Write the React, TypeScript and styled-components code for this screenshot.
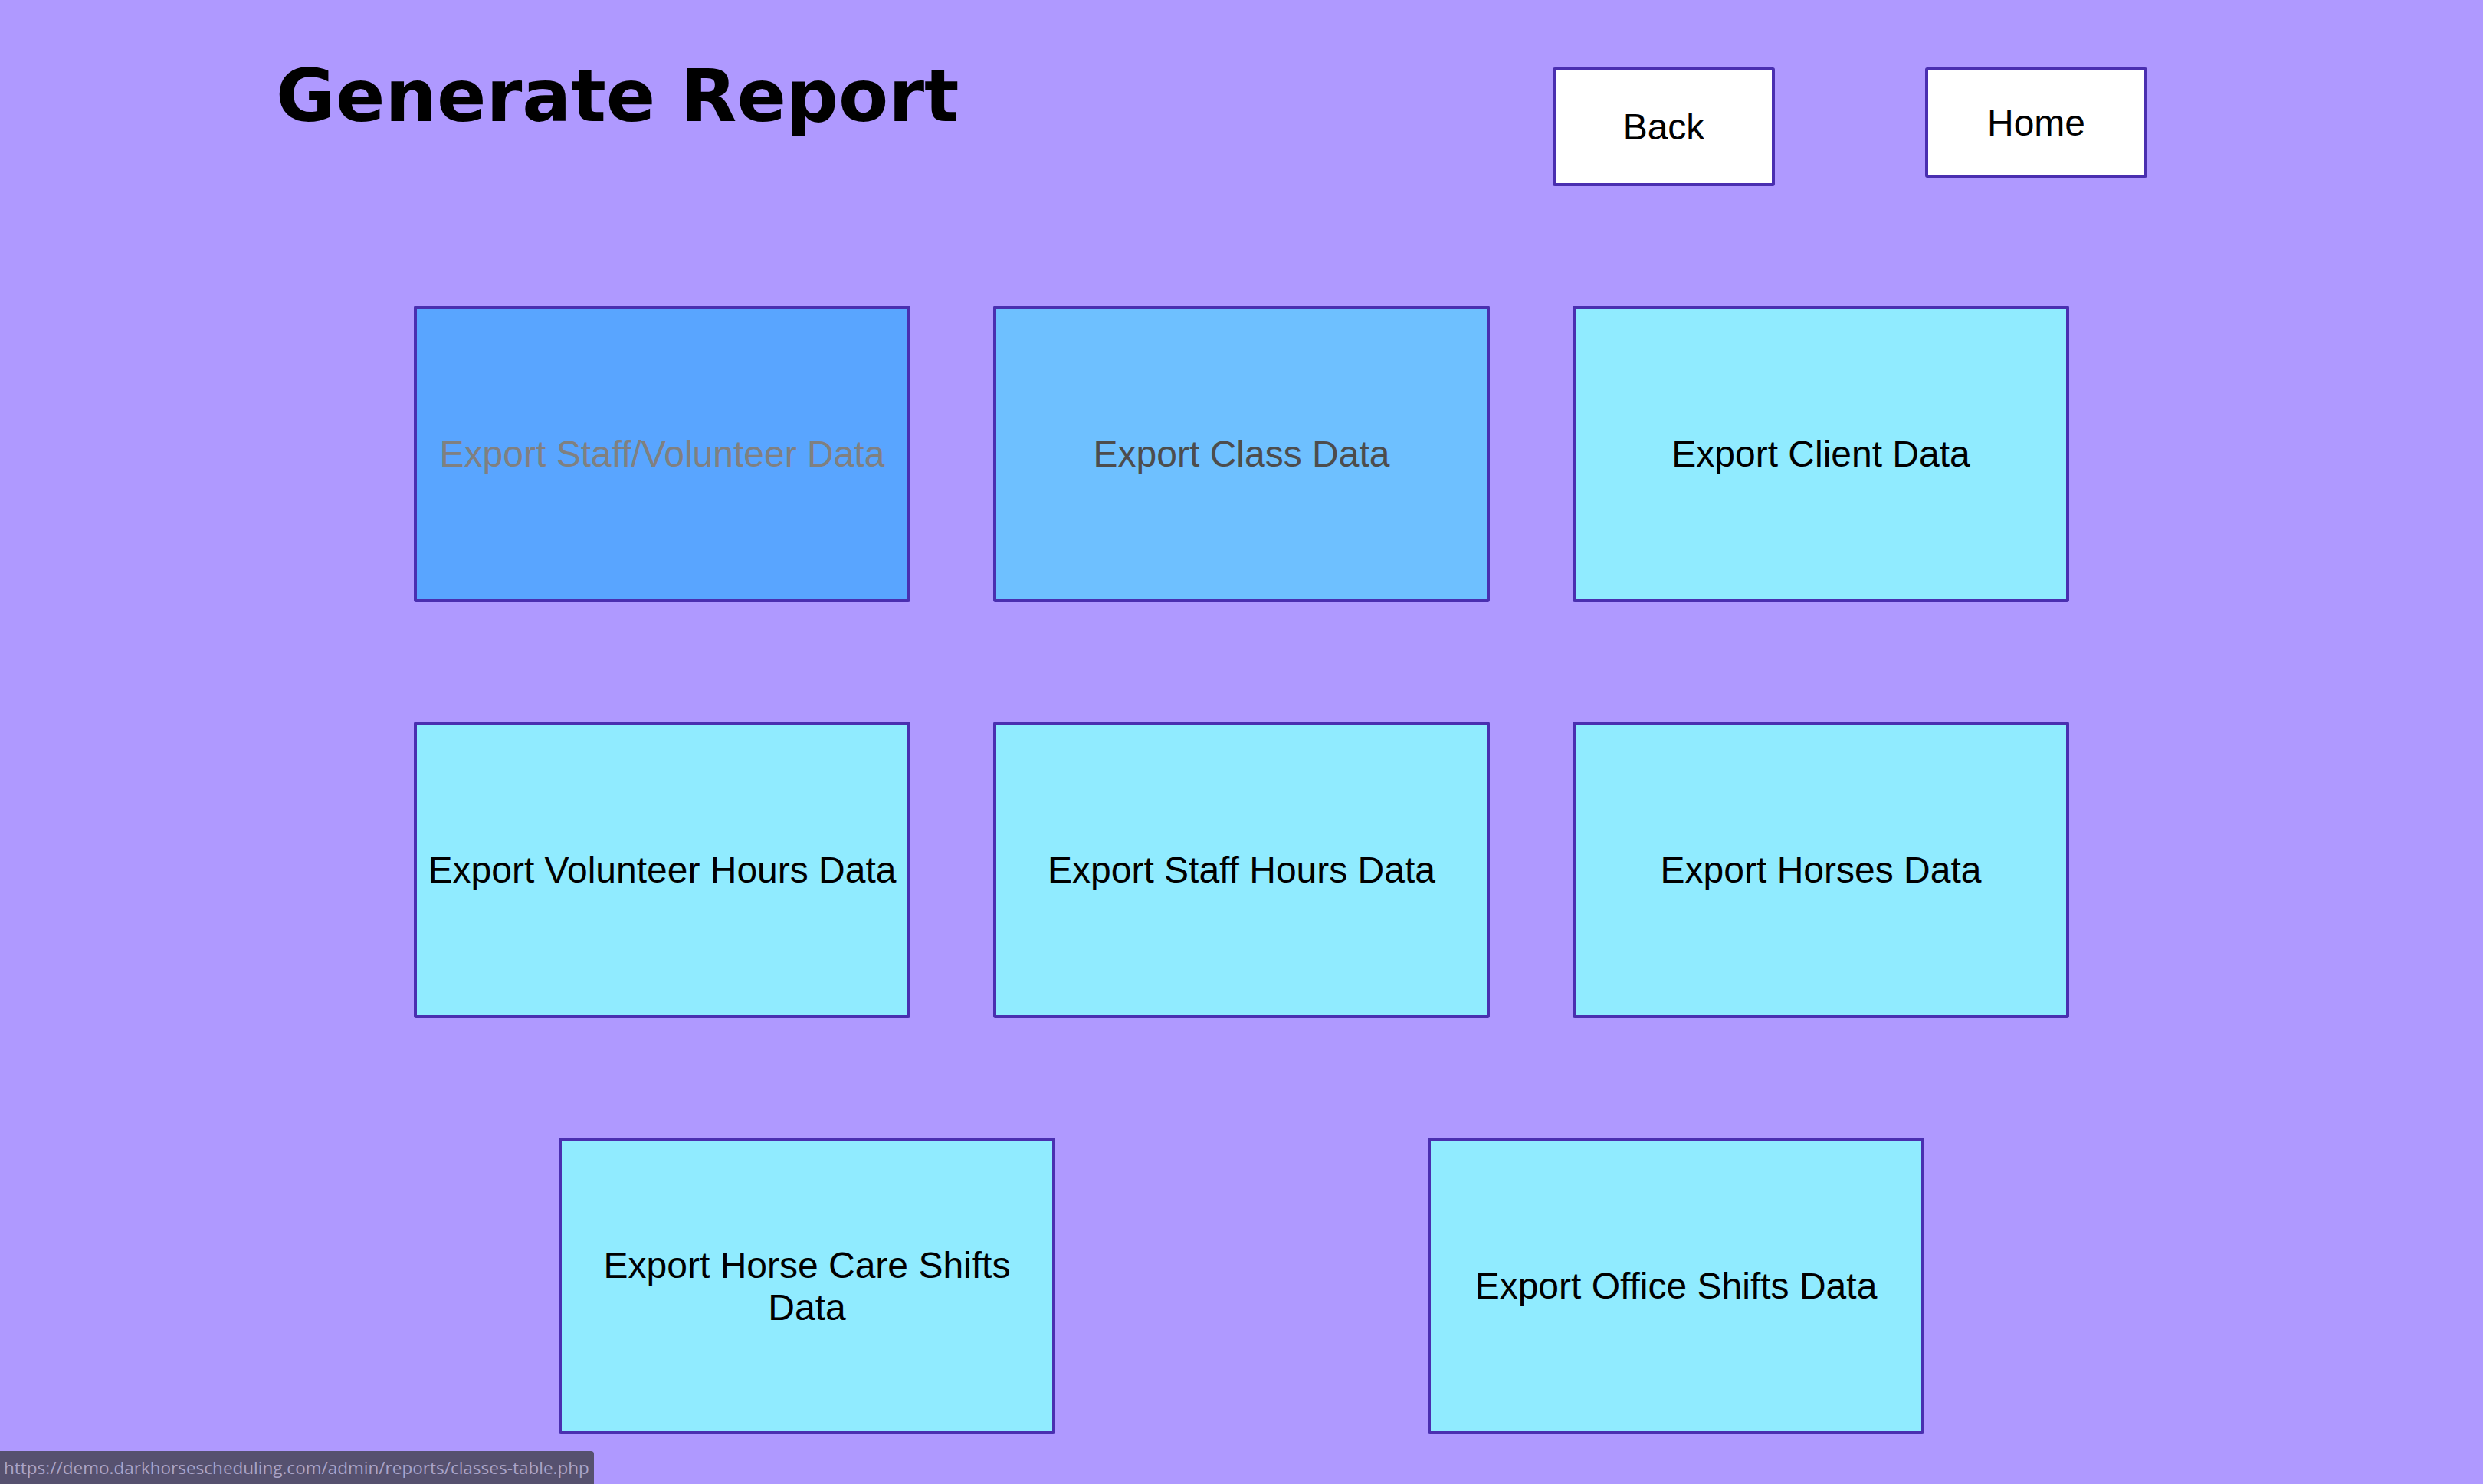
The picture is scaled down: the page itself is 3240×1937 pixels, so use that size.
import styled, { createGlobalStyle } from "styled-components";

const GlobalStyle = createGlobalStyle`
  html, body {
    margin: 0;
    padding: 0;
    background-color: #af99ff;
  }
  body {
    font-family: "Liberation Sans", Arial, sans-serif;
  }
`;

const Page = styled.div`
  min-height: 100vh;
  background-color: #af99ff;
  display: flex;
  flex-direction: column;
  gap: 156px;
`;

const Header = styled.div`
  display: flex;
  justify-content: space-between;
  align-items: flex-start;
  padding: 70px 438px 0 360px;
`;

const Title = styled.h1`
  margin: 0;
  font-family: "DejaVu Sans", Verdana, sans-serif;
  font-weight: bold;
  font-size: 95px;
  line-height: normal;
  color: #000;
`;

const NavButtons = styled.div`
  display: flex;
  align-items: flex-start;
  gap: 196px;
  margin-top: 18px;
`;

const NavButton = styled.button<{ $tall?: boolean }>`
  box-sizing: border-box;
  width: 290px;
  height: ${(p) => (p.$tall ? "155px" : "144px")};
  background-color: #fff;
  border: 4px solid #4a2fb0;
  border-radius: 3px;
  font-family: "Liberation Sans", Arial, sans-serif;
  font-size: 48px;
  color: #000;
  cursor: pointer;
  padding: 0;
`;

const ExportGrid = styled.div`
  width: 70%;
  margin: 0 auto;
  display: flex;
  flex-direction: column;
  gap: 156px;
`;

const ExportRow = styled.div`
  display: flex;
  justify-content: space-around;
`;

const tones: Record<string, { bg: string; fg: string }> = {
  pressed: { bg: "#59a5ff", fg: "#808080" },
  hover: { bg: "#6ec0ff", fg: "#4d4d4d" },
  normal: { bg: "#90ebff", fg: "#000" },
};

const ExportBox = styled.button<{ $tone: string }>`
  box-sizing: border-box;
  width: 648px;
  height: 387px;
  display: flex;
  align-items: center;
  justify-content: center;
  text-align: center;
  padding: 0;
  background-color: ${(p) => tones[p.$tone].bg};
  color: ${(p) => tones[p.$tone].fg};
  border: 4px solid #4a2fb0;
  border-radius: 3px;
  font-family: "Liberation Sans", Arial, sans-serif;
  font-size: 48px;
  line-height: normal;
  cursor: pointer;
`;

const StatusBubble = styled.div`
  position: fixed;
  left: 0;
  bottom: 0;
  height: 43px;
  padding: 0 6px 0 5px;
  display: flex;
  align-items: center;
  background-color: #56516f;
  border-top-right-radius: 4px;
  color: #aaa4c8;
  font-family: "Open Sans", "Noto Sans", sans-serif;
  font-size: 22.5px;
  white-space: nowrap;
`;

const rows = [
  [
    { label: "Export Staff/Volunteer Data", tone: "pressed" },
    { label: "Export Class Data", tone: "hover" },
    { label: "Export Client Data", tone: "normal" },
  ],
  [
    { label: "Export Volunteer Hours Data", tone: "normal" },
    { label: "Export Staff Hours Data", tone: "normal" },
    { label: "Export Horses Data", tone: "normal" },
  ],
  [
    { label: "Export Horse Care Shifts Data", tone: "normal" },
    { label: "Export Office Shifts Data", tone: "normal" },
  ],
];

const App = () => {
  return (
    <>
      <GlobalStyle />
      <Page>
        <Header>
          <Title>Generate Report</Title>
          <NavButtons>
            <NavButton $tall>Back</NavButton>
            <NavButton>Home</NavButton>
          </NavButtons>
        </Header>

        <ExportGrid>
          {rows.map((row, i) => (
            <ExportRow key={i}>
              {row.map((item) => (
                <ExportBox key={item.label} $tone={item.tone}>
                  {item.label}
                </ExportBox>
              ))}
            </ExportRow>
          ))}
        </ExportGrid>
      </Page>
      <StatusBubble>
        https://demo.darkhorsescheduling.com/admin/reports/classes-table.php
      </StatusBubble>
    </>
  );
};

export default App;
